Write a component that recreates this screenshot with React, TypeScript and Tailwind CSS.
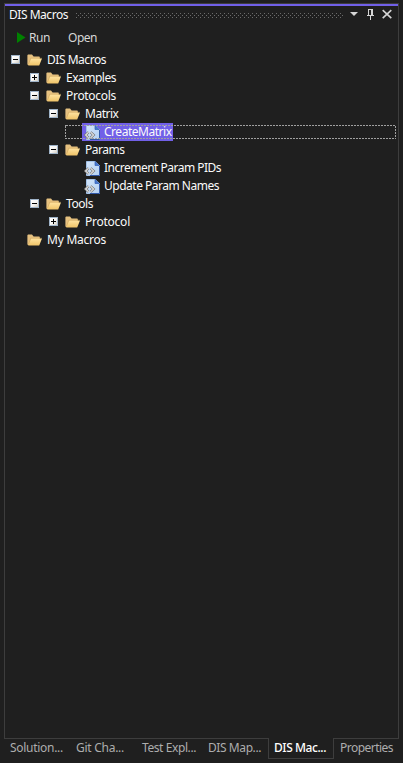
import { useLayoutEffect, useRef } from "react";

function Label({ text, width, className = "" }: { text: string; width: number; className?: string }) {
  const ref = useRef<HTMLSpanElement>(null);
  useLayoutEffect(() => {
    const el = ref.current;
    if (!el) return;
    el.style.letterSpacing = "0px";
    const natural = el.getBoundingClientRect().width;
    el.style.letterSpacing = `${(width - natural) / text.length}px`;
  }, [text, width]);
  return (
    <span ref={ref} className={`shrink-0 whitespace-pre ${className}`}>
      {text}
    </span>
  );
}

function Folder() {
  return (
    <svg width="16" height="16" viewBox="0 0 16 16" className="shrink-0">
      <defs>
        <linearGradient id="folderFront" x1="0" y1="0" x2="0" y2="1">
          <stop offset="0" stopColor="#ffe3a0" />
          <stop offset="1" stopColor="#efc368" />
        </linearGradient>
      </defs>
      <path d="M.4 3.2 1 2.6H5L6.6 4.4H12.2L12.8 5V8L11 13H1.2L.4 12.4Z" fill="#e6c180" />
      <path d="M4 6.4H15L12.2 13.4H1.2Z" fill="url(#folderFront)" />
      <path d="M1.6 12 3.8 6.2H14.8" fill="none" stroke="#c8994a" strokeWidth=".4" />
    </svg>
  );
}

function Macro() {
  return (
    <svg width="16" height="16" viewBox="0 0 16 16" className="shrink-0">
      <defs>
        <linearGradient id="page" x1="0" y1="0" x2="1" y2="1">
          <stop offset="0" stopColor="#d2e5fb" />
          <stop offset="1" stopColor="#b4d0f2" />
        </linearGradient>
      </defs>
      <path d="M2.5 1.5H11L15.5 5.5V15.5H2.5Z" fill="url(#page)" stroke="#a4c2e8" />
      <path d="M15.5 6V15.5H6" fill="none" stroke="#3158a8" />
      <path d="M11 1.5V5.5H15.2Z" fill="#4778d0" stroke="#315fb7" strokeWidth=".7" />
      <path d="M4.6 8.2 1.6 11 4.6 13.8M6.6 8.2 9.6 11 6.6 13.8" fill="none" stroke="#777" strokeWidth="2.4" />
      <path d="M4.6 8.2 1.6 11 4.6 13.8M6.6 8.2 9.6 11 6.6 13.8" fill="none" stroke="#e6e6e6" strokeWidth="1.1" />
    </svg>
  );
}

function Toggle({ open }: { open: boolean }) {
  return (
    <svg width="9" height="9" viewBox="0 0 9 9" className="mb-px shrink-0" shapeRendering="crispEdges">
      <defs>
        <linearGradient id="toggleFace" gradientUnits="userSpaceOnUse" x1="1" y1="1" x2="8" y2="8">
          <stop offset="0" stopColor="#fff" />
          <stop offset=".5" stopColor="#f7f6f4" />
          <stop offset="1" stopColor="#d2cec3" />
        </linearGradient>
      </defs>
      <rect width="9" height="9" fill="#9fb3c8" />
      <rect x="1" y="1" width="7" height="7" fill="url(#toggleFace)" />
      <rect x="2" y="4" width="5" height="1" fill="#000" />
      {!open && <rect x="4" y="2" width="1" height="5" fill="#000" />}
    </svg>
  );
}

type Item = { text: string; width: number; indent: string; open?: boolean; leaf?: boolean; selected?: boolean };

const items: Item[] = [
  { text: "DIS Macros", width: 59, indent: "pl-[6px]", open: true },
  { text: "Examples", width: 50, indent: "pl-[25px]", open: false },
  { text: "Protocols", width: 50, indent: "pl-[25px]", open: true },
  { text: "Matrix", width: 33.5, indent: "pl-[44px]", open: true },
  { text: "CreateMatrix", width: 67.5, indent: "pl-[60px]", leaf: true, selected: true },
  { text: "Params", width: 39.5, indent: "pl-[44px]", open: true },
  { text: "Increment Param PIDs", width: 117, indent: "pl-[77px]", leaf: true },
  { text: "Update Param Names", width: 115, indent: "pl-[77px]", leaf: true },
  { text: "Tools", width: 27, indent: "pl-[25px]", open: true },
  { text: "Protocol", width: 45, indent: "pl-[44px]", open: false },
  { text: "My Macros", width: 59, indent: "pl-[6px]" },
];

function Row({ item }: { item: Item }) {
  if (item.selected)
    return (
      <div className={`flex h-[18px] items-center pr-[2px] ${item.indent}`}>
        <div className="relative flex h-[18px] flex-1 items-center pl-[17px]">
          <div className="flex h-[18px] w-[91px] items-center gap-[4px] bg-[#7160e8] pl-[2px]">
            <Macro />
            <Label text={item.text} width={item.width} />
          </div>
          <svg className="absolute inset-x-0 top-[2px] h-[14px] w-full" shapeRendering="crispEdges">
            <rect x=".5" y=".5" width="330" height="13" fill="none" stroke="#a0a0a0" strokeDasharray="2 1" />
          </svg>
        </div>
      </div>
    );
  return (
    <div className={`flex h-[18px] items-center ${item.indent}`}>
      {item.leaf ? (
        <span className="w-[2px]" />
      ) : (
        <span className="flex w-[16px]">{item.open !== undefined && <Toggle open={item.open} />}</span>
      )}
      {item.leaf ? <Macro /> : <Folder />}
      <Label text={item.text} width={item.width} className="ml-[4px]" />
    </div>
  );
}

export default function App() {
  return (
    <div className="h-[763px] w-[403px] overflow-hidden bg-[#1f1f1f] pt-[3px] pl-[4px] font-['Noto_Sans','Open_Sans',sans-serif] text-[12px] leading-[18px] text-[#fafafa]">
      <div className="flex h-[735px] w-[395px] flex-col border-x border-t border-[#3d3d3d]">
        <div className="h-[2px] shrink-0 bg-[#7160e8]" />
        <div className="flex h-[18px] shrink-0 items-center pl-[4px]">
          <Label text="DIS Macros" width={59} />
          <svg width="268" height="5" className="ml-[8px] shrink-0" shapeRendering="crispEdges">
            <defs>
              <pattern id="grip" width="4" height="4" patternUnits="userSpaceOnUse">
                <path d="M0 0h1v1h-1zM2 2h1v1h-1z" fill="#6b6b6b" />
              </pattern>
            </defs>
            <rect width="268" height="5" fill="url(#grip)" />
          </svg>
          <svg width="52" height="18" viewBox="344 6 52 18" className="shrink-0">
            <path d="M350 12H358L354 16Z" fill="#d6d6d6" />
            <path d="M367 15.5H374M368.5 15V9.5H372.5V15M371.5 10V15M370.5 16V20" fill="none" stroke="#d6d6d6" shapeRendering="crispEdges" />
            <path d="M382.7 10.2 391.3 18.2M391.3 10.2 382.7 18.2" stroke="#d6d6d6" strokeWidth="1.6" />
          </svg>
        </div>
        <div className="flex h-[27px] shrink-0 items-center pl-[12px] text-[#d6d6d6]">
          <svg width="9" height="11" className="shrink-0">
            <path d="M0 0 8.5 5.5 0 11Z" fill="#008000" />
          </svg>
          <Label text="Run" width={21} className="ml-[3px]" />
          <Label text="Open" width={29} className="ml-[18px]" />
        </div>
        <div className="flex flex-col">
          {items.map((item, i) => (
            <Row key={i} item={item} />
          ))}
        </div>
      </div>
      <div className="flex h-[21px] w-[395px] text-[#adadad]">
        <div className="flex h-[21px] w-[264px] border-t border-[#3d3d3d] pl-[6px]">
          <Label text="Solution..." width={53} />
          <Label text="Git Cha..." width={48} className="ml-[13px]" />
          <Label text="Test Expl..." width={54} className="ml-[18px]" />
          <Label text="DIS Map..." width={53} className="ml-[12px]" />
        </div>
        <div className="flex h-[21px] w-[66px] border-x border-b border-[#3d3d3d] pt-px pl-[5px] font-medium text-white">
          <Label text="DIS Mac..." width={52} />
        </div>
        <div className="flex h-[21px] w-[65px] border-t border-[#3d3d3d] pl-[6px]">
          <Label text="Properties" width={53} />
        </div>
      </div>
    </div>
  );
}
